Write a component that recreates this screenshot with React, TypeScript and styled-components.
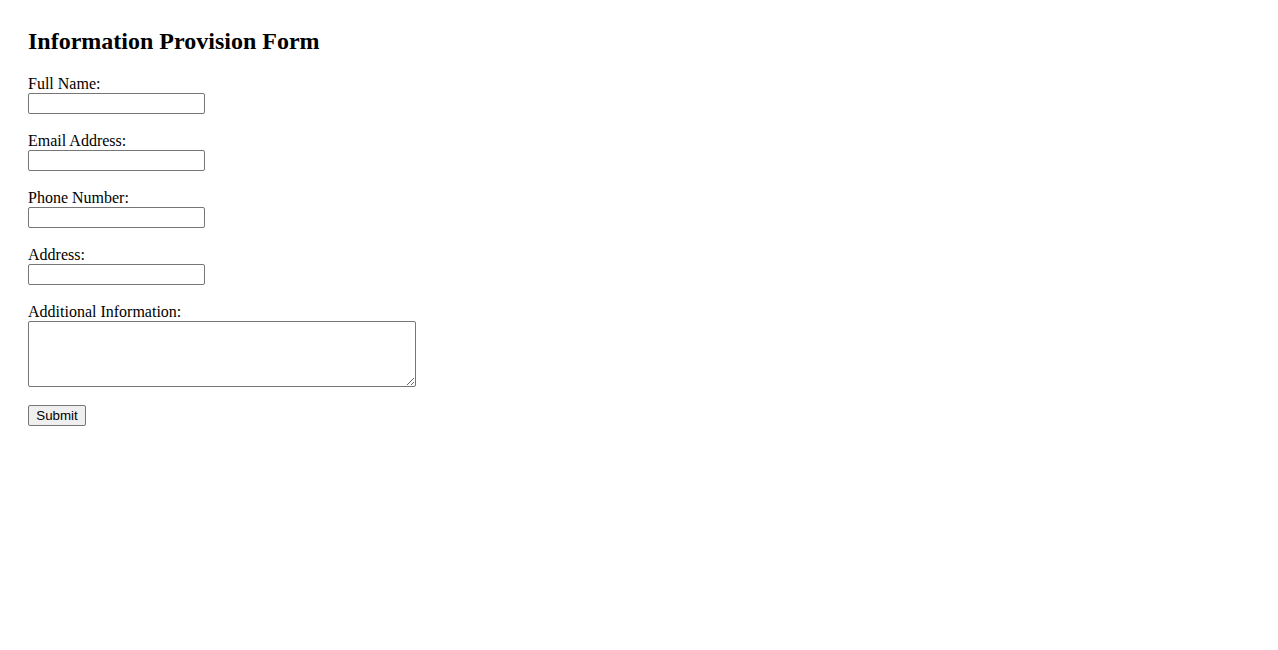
import React from "react";
import styled, { createGlobalStyle } from "styled-components";

const GlobalStyle = createGlobalStyle`
  html, body {
    margin: 0;
    padding: 0;
    background: #fff;
  }
  body {
    font-family: "Liberation Serif", "Times New Roman", serif;
    font-size: 16px;
    color: #000;
  }
`

const Page = styled.div`
  padding: 28px;
`
const Title = styled.h2`
  margin: 0 0 19px;
  font-size: 24px;
  font-weight: bold;
  line-height: 27.5px;
`
const Form = styled.form`
  display: flex;
  flex-direction: column;
  align-items: flex-start;
`
const Field = styled.div`
  display: flex;
  flex-direction: column;
  align-items: flex-start;
  margin-bottom: 18px;
`
const Label = styled.label`
  display: block;
  line-height: 18px;
  height: 18px;
`
const Input = styled.input`
  box-sizing: border-box;
  width: 177px;
  height: 21px;
  padding: 1px 2px;
  border: 1px solid #767676;
  border-radius: 2px;
  font-family: "Liberation Sans", Arial, sans-serif;
  font-size: 13.33px;
  background: #fff;
  margin: 0;
`
const TextArea = styled.textarea`
  box-sizing: border-box;
  width: 388px;
  height: 66px;
  padding: 2px;
  border: 1px solid #767676;
  border-radius: 2px;
  font-family: "Liberation Mono", monospace;
  font-size: 13.33px;
  margin: 0;
  background: #fff;
`
const SubmitButton = styled.button`
  box-sizing: border-box;
  width: 58px;
  height: 21px;
  padding: 1px 6px;
  border: 1px solid #767676;
  border-radius: 2px;
  background: #efefef;
  font-family: "Liberation Sans", Arial, sans-serif;
  font-size: 13.33px;
  color: #000;
  margin: 0;
`

const fields = [
  { id: "fullName", label: "Full Name:", type: "text" },
  { id: "email", label: "Email Address:", type: "email" },
  { id: "phone", label: "Phone Number:", type: "tel" },
  { id: "address", label: "Address:", type: "text" },
]

const App = () => {
  return (
    <Page>
      <GlobalStyle />
      <Title>Information Provision Form</Title>
      <Form onSubmit={(e) => e.preventDefault()}>
        {fields.map((f) => (
          <Field key={f.id}>
            <Label htmlFor={f.id}>{f.label}</Label>
            <Input id={f.id} name={f.id} type={f.type} />
          </Field>
        ))}
        <Field>
          <Label htmlFor="info">Additional Information:</Label>
          <TextArea id="info" name="info" rows={4} />
        </Field>
        <SubmitButton type="submit">Submit</SubmitButton>
      </Form>
    </Page>
  )
}

export default App;
